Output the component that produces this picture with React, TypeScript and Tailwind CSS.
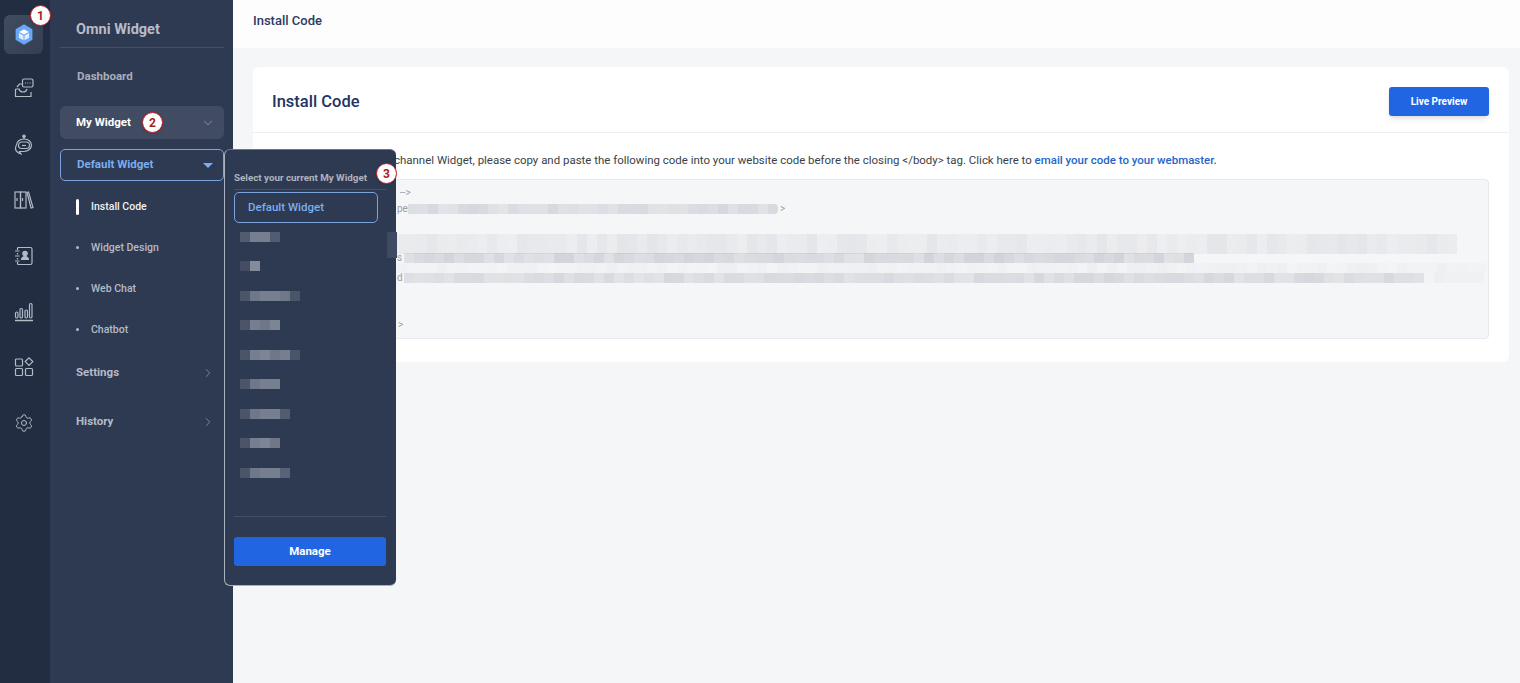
import React from "react";
import { ChevronDown, ChevronRight, Settings } from "lucide-react";

const ROW_SHADES = [
  [0.25, 0.5, 0.5, 0.25],
  [0.15, 0.6],
  [0.2, 0.45, 0.5, 0.5, 0.45, 0.2],
  [0.2, 0.5, 0.45, 0.55],
  [0.2, 0.5, 0.55, 0.45, 0.5, 0.2],
  [0.2, 0.45, 0.5, 0.5],
  [0.2, 0.45, 0.5, 0.5, 0.25],
  [0.2, 0.5, 0.55, 0.45],
  [0.2, 0.45, 0.5, 0.5, 0.3],
];

// pseudo random gray cells for the redacted code
function cells(count: number, seed: number, min: number, max: number) {
  const out: number[] = [];
  let s = seed;
  for (let i = 0; i < count; i++) {
    s = (s * 73 + 41) % 101;
    out.push(min + ((max - min) * s) / 100);
  }
  return out;
}

function Mask({ count, seed, min, max, h = "h-[10px]", className = "" }: { count: number; seed: number; min: number; max: number; h?: string; className?: string }) {
  return (
    <div className={`flex shrink-0 overflow-hidden ${h} ${className}`}>
      {cells(count, seed, min, max).map((a, i) => (
        <div key={i} className="w-[10px] h-full" style={{ backgroundColor: `rgba(150,156,168,${a})` }} />
      ))}
    </div>
  );
}

function Badge({ n, className }: { n: number; className: string }) {
  return (
    <div className={`absolute z-30 w-[21px] h-[21px] rounded-full bg-white border-[1.5px] border-[#c8181e] shadow flex items-center justify-center text-[12px] font-bold text-[#a81a1f] ${className}`}>
      {n}
    </div>
  );
}

function IconCube() {
  return (
    <svg width="20" height="21" viewBox="0 0 22 24">
      <path d="M11 1.500l8.600 5v11L11 22.500l-8.600-5v-11z" fill="#6aa8f7" stroke="#6aa8f7" strokeWidth="2" strokeLinejoin="round" />
      <path d="M11 6l5.500 3L11 12 5.500 9z" fill="#ffffff" />
      <path d="M5.200 10.200l5.200 2.900v5.600l-5.200-3zM16.800 10.200l-5.200 2.900v5.600l5.200-3z" fill="#e3eefc" />
    </svg>
  );
}

function IconInbox() {
  return (
    <svg width="20" height="20" viewBox="0 0 20 20" fill="none" stroke="#b4bac6" strokeWidth="1.200">
      <path d="M3 9l2.500-3H9M1.500 11v7.500h15.500V14" />
      <path d="M1.500 11h3.500c.5 2 1.500 3 4 3s3.500-1 4-3" />
      <rect x="8.500" y="1" width="10.500" height="8" rx="1.500" />
      <path d="M11 5h1M13.300 5h1M15.600 5h1" />
    </svg>
  );
}

function IconBot() {
  return (
    <svg width="20" height="22" viewBox="0 0 20 22" fill="none" stroke="#b4bac6" strokeWidth="1.200">
      <circle cx="10" cy="2.200" r="1.200" fill="#b4bac6" />
      <path d="M10 3.500V5" />
      <path d="M2.500 11c0-3.500 3.300-6 7.500-6s7.500 2.500 7.500 6-3.300 6.500-7.500 6.500H5.500l1.500 2.500c-3-1-5.500-2.500-5.500-5.500 0-1 .2-2.500 1-3.500z" />
      <rect x="4.500" y="8" width="11" height="6.500" rx="3.200" />
      <path d="M8 11.500h4" />
    </svg>
  );
}

function IconBooks() {
  return (
    <svg width="20" height="20" viewBox="0 0 20 20" fill="none" stroke="#b4bac6" strokeWidth="1.200">
      <rect x="1" y="2" width="5.500" height="16" />
      <rect x="6.500" y="2" width="5.500" height="16" />
      <path d="M13 2.500l1.500-.5 4.500 15.500-2 .5z" />
      <path d="M3 8v3M8.500 8v3" />
    </svg>
  );
}

function IconContacts() {
  return (
    <svg width="20" height="20" viewBox="0 0 20 20" fill="none" stroke="#b4bac6" strokeWidth="1.200">
      <path d="M3.500 4V2.500A1 1 0 0 1 4.500 1.500h12a1.500 1.500 0 0 1 1.500 1.500v14a1.500 1.500 0 0 1-1.500 1.500h-12a1 1 0 0 1-1-1V16" />
      <path d="M1 5h4.500M1 10h4.500M1 15h4.500M3.500 7v1.500M3.500 12v1.500" />
      <circle cx="11" cy="7.500" r="2.200" fill="#b4bac6" />
      <path d="M7.500 13.500c.3-2 1.700-3 3.500-3s3.200 1 3.500 3z" fill="#b4bac6" />
    </svg>
  );
}

function IconBars() {
  return (
    <svg width="20" height="20" viewBox="0 0 20 20" fill="none" stroke="#b4bac6" strokeWidth="1.200">
      <rect x="1.500" y="10" width="2.500" height="6" rx="1.200" />
      <rect x="6" y="6.500" width="2.500" height="9.500" rx="1.200" />
      <rect x="11" y="8" width="2.500" height="8" rx="1.200" />
      <rect x="15.500" y="1.500" width="2.500" height="14.500" rx="1.200" />
      <path d="M1 18.500h18" strokeWidth="1.500" />
    </svg>
  );
}

function IconApps() {
  return (
    <svg width="20" height="20" viewBox="0 0 20 20" fill="none" stroke="#b4bac6" strokeWidth="1.200">
      <rect x="1.500" y="2" width="7" height="7" rx="1" />
      <rect x="1.500" y="11.500" width="7" height="7" rx="1" />
      <rect x="11.500" y="11.500" width="7" height="7" rx="1" />
      <path d="M15 .8l3.800 3.800L15 8.400l-3.800-3.800z" />
    </svg>
  );
}

function Rail() {
  return (
    <div className="w-[50px] shrink-0 bg-[#222d41] flex flex-col items-center pt-[15px] pr-[3px]">
      <div className="w-[39px] h-[39px] rounded-md bg-gradient-to-br from-[#414c60] to-[#333f55] flex items-center justify-center">
        <IconCube />
      </div>
      <div className="mt-[24px] h-[20px] flex items-center"><IconInbox /></div>
      <div className="mt-[36px] h-[22px] flex items-center"><IconBot /></div>
      <div className="mt-[34px] h-[20px] flex items-center"><IconBooks /></div>
      <div className="mt-[36px] h-[20px] flex items-center"><IconContacts /></div>
      <div className="mt-[36px] h-[20px] flex items-center"><IconBars /></div>
      <div className="mt-[35px] h-[20px] flex items-center"><IconApps /></div>
      <div className="mt-[36px] h-[20px] flex items-center"><Settings size={20} strokeWidth={1.200} color="#b4bac6" /></div>
    </div>
  );
}

function SubItem({ label, active }: { label: string; active?: boolean }) {
  return (
    <div className="h-[41px] flex items-center pl-[16px]">
      {active ? (
        <span className="w-[3px] h-[16px] bg-white rounded-sm" />
      ) : (
        <span className="w-[3px] h-[3px] rounded-full bg-[#b4bac6]" />
      )}
      <span className={`ml-[12px] text-[10.500px] font-medium ${active ? "text-[#eef0f4]" : "text-[#b4bac6]"}`}>{label}</span>
    </div>
  );
}

function Sidebar() {
  return (
    <div className="w-[183px] shrink-0 bg-[#2e3a52] pl-[10px] pr-[9px] relative">
      <div className="h-[48px] border-b border-[#465065] pl-[16px] pt-[21px] text-[14.500px] leading-[18px] font-bold text-[#b8bcc6]">Omni Widget</div>
      <div className="h-[58px] pl-[17px] flex items-center text-[11.500px] font-bold text-[#a8aeba]">Dashboard</div>
      <div className="h-[33px] rounded-md bg-[#414c63] pl-[16px] pr-[9px] flex items-center justify-between text-[11.500px] font-bold text-white">
        My Widget
        <ChevronDown size={14} strokeWidth={1} color="#b4bac6" />
      </div>
      <div className="mt-[10px] h-[32px] rounded-[5px] border border-[#7ba3dc] pl-[16px] pr-[10px] flex items-center justify-between text-[11.500px] font-bold text-[#7aaef0]">
        Default Widget
        <span className="w-0 h-0 border-x-[5px] border-x-transparent border-t-[5px] border-t-[#7aaef0]" />
      </div>
      <div className="mt-[5px]">
        <SubItem label="Install Code" active />
        <SubItem label="Widget Design" />
        <SubItem label="Web Chat" />
        <SubItem label="Chatbot" />
      </div>
      <div className="mt-[1px] h-[44px] pl-[16px] pr-[9px] flex items-center justify-between text-[11.500px] font-bold text-[#b4bac6]">
        Settings
        <ChevronRight size={14} strokeWidth={1} color="#b4bac6" />
      </div>
      <div className="mt-[3px] h-[48px] pl-[16px] pr-[9px] flex items-center justify-between text-[11.500px] font-bold text-[#b4bac6]">
        History
        <ChevronRight size={14} strokeWidth={1} color="#b4bac6" />
      </div>
    </div>
  );
}

function WidgetPopup() {
  return (
    <div className="absolute z-20 left-[224px] top-[149px] w-[172px] h-[437px] rounded-md bg-[#2e3a52] border border-[#aab1bf] border-r-0 border-t-[#6d7689] pl-[9px] pr-[10px] flex flex-col">
      <div className="h-[40px] shrink-0 border-b border-[#465065] pt-[22px] text-[9.800px] leading-[12px] font-bold text-[#aeb3be]">Select your current My Widget</div>
      <div className="mt-[2px] shrink-0 w-[144px] h-[31px] rounded-[5px] border border-[#7ba3dc] pl-[13px] flex items-center text-[11.500px] font-medium text-[#7aaef0]">Default Widget</div>
      <div className="shrink-0 mt-[8.500px] pl-[6px] flex flex-col gap-[19.500px]">
        {ROW_SHADES.map((row, i) => (
          <div key={i} className="flex h-[10px]">
            {row.map((a, j) => (
              <div key={j} className="w-[10px] h-full" style={{ backgroundColor: `rgba(190,195,205,${a})` }} />
            ))}
          </div>
        ))}
      </div>
      <div className="mt-[38.500px] shrink-0 border-t border-[#465065]" />
      <button className="mt-[20px] shrink-0 h-[29px] rounded-[3px] bg-[#2265e3] text-white text-[11.500px] font-bold">Manage</button>
      <div className="absolute left-[162px] top-[82px] w-[10px] h-[26px] bg-[#3e4a61]" />
    </div>
  );
}

function CodeBox() {
  return (
    <div className="mt-[11px] h-[160px] rounded-[4px] border border-[#e6e9ee] bg-[#f5f6f8] pl-[123px] pt-[7px] text-[10px] leading-[12px] text-[#9a9ea6] overflow-hidden">
      <div className="h-[12px] pl-[3px]">--&gt;</div>
      <div className="mt-[4px] h-[12px] flex items-center">
        <span>pe</span>
        <Mask count={37} seed={7} min={0.2} max={0.34} className="rounded-r" />
        <span className="ml-[2px]">&gt;</span>
      </div>
      <div className="mt-[19px]">
        <Mask count={106} seed={11} min={0.08} max={0.18} h="h-[20px]" className="rounded-r-lg" />
        <div className="flex items-center h-[10px] -mt-px">
          <span className="w-[7px]">s</span>
          <Mask count={79} seed={19} min={0.22} max={0.38} />
        </div>
        <Mask count={109} seed={3} min={0.02} max={0.07} />
        <div className="flex items-center h-[10px]">
          <span className="w-[7px]">d</span>
          <Mask count={102} seed={29} min={0.2} max={0.34} />
          <Mask count={6} seed={5} min={0.02} max={0.08} />
        </div>
      </div>
      <div className="mt-[36px] h-[12px] pl-[1px]">&gt;</div>
    </div>
  );
}

export default function App() {
  return (
    <div className="relative w-[1520px] h-[683px] overflow-hidden flex bg-[#f5f6f8] font-['Roboto',sans-serif]">
      <Rail />
      <Sidebar />
      <div className="flex-1 min-w-0 flex flex-col">
        <div className="h-[48px] shrink-0 bg-[#fdfdfe] pl-[20px] pb-[6px] flex items-center text-[13px] font-medium text-[#2c3a5e]">Install Code</div>
        <div className="pl-[20px] pr-[11px] pt-[19px]">
          <div className="h-[295px] rounded-md bg-white">
            <div className="h-[66px] border-b border-[#eceef1] pl-[19px] pr-[20px] pt-[4px] flex items-center justify-between">
              <span className="mt-[2px] text-[16.500px] font-medium text-[#23345f]">Install Code</span>
              <button className="w-[100px] h-[29px] rounded-[3px] bg-[#2265e3] text-white text-[10px] font-bold shadow-md">Live Preview</button>
            </div>
            <div className="pl-[20px] pr-[20px] pt-[19px]">
              <div className="h-[16px] pl-[20px] text-[11.460px] leading-[16px] text-[#3a3f47] whitespace-nowrap">
                To install your Omnichannel Widget, please copy and paste the following code into your website code before the closing &lt;/body&gt; tag. Click here to <span className="font-medium text-[#2265c9]">email your code to your webmaster.</span>
              </div>
              <CodeBox />
            </div>
          </div>
        </div>
      </div>
      <WidgetPopup />
      <Badge n={1} className="left-[30px] top-[5px]" />
      <Badge n={2} className="left-[142px] top-[112px]" />
      <Badge n={3} className="left-[376px] top-[163px]" />
    </div>
  );
}
